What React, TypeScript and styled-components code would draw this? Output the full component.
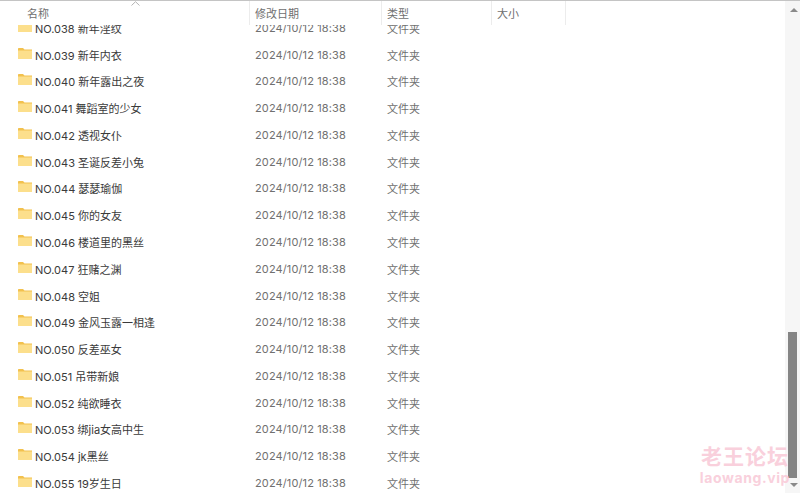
import { createGlobalStyle } from 'styled-components';
import styled from 'styled-components';

const folders = [
  'NO.038 新年淫纹',
  'NO.039 新年内衣',
  'NO.040 新年露出之夜',
  'NO.041 舞蹈室的少女',
  'NO.042 透视女仆',
  'NO.043 圣诞反差小兔',
  'NO.044 瑟瑟瑜伽',
  'NO.045 你的女友',
  'NO.046 楼道里的黑丝',
  'NO.047 狂赌之渊',
  'NO.048 空姐',
  'NO.049 金风玉露一相逢',
  'NO.050 反差巫女',
  'NO.051 吊带新娘',
  'NO.052 纯欲睡衣',
  'NO.053 绑jia女高中生',
  'NO.054 jk黑丝',
  'NO.055 19岁生日',
];

const FolderIcon = () => (
  <svg width="14" height="11" viewBox="0 0 14 11">
    <path d="M0 1C0 .4.4 0 1 0h4l1.5 1.5H14V11H0z" fill="#f2c14e" />
    <rect x="0" y="2.5" width="14" height="8.5" fill="#fcdf8c" />
  </svg>
);

const App = () => {
  return (
    <Page>
      <GlobalStyle />
      <Main>
        <Header>
          <NameHead>
            名称
            <SortArrow width="9" height="5" viewBox="0 0 9 5">
              <path d="M.5 4.5L4.5.7l4 3.8" fill="none" stroke="#b4b4b4" />
            </SortArrow>
          </NameHead>
          <DateHead>修改日期</DateHead>
          <TypeHead>类型</TypeHead>
          <SizeHead>大小</SizeHead>
        </Header>
        <List>
          <Rows>
            {folders.map((name) => (
              <Row key={name}>
                <NameCell>
                  <FolderIcon />
                  <span>{name}</span>
                </NameCell>
                <DateCell>2024/10/12 18:38</DateCell>
                <TypeCell>文件夹</TypeCell>
              </Row>
            ))}
          </Rows>
        </List>
      </Main>
      <Scrollbar>
        <UpArrow />
        <Thumb />
        <DownArrow />
      </Scrollbar>
      <Watermark>
        <WatermarkTitle>老王论坛</WatermarkTitle>
        <WatermarkUrl>laowang.vip</WatermarkUrl>
      </Watermark>
    </Page>
  );
};

export default App;

const GlobalStyle = createGlobalStyle`
  html, body {
    margin: 0;
    padding: 0;
    background: #fff;
  }
`;

const Page = styled.div`
  position: relative;
  display: flex;
  width: 800px;
  height: 493px;
  overflow: hidden;
  background: #fff;
  font-family: 'Inter', 'Noto Sans CJK SC', sans-serif;
`;

const Main = styled.div`
  flex: 1;
  display: flex;
  flex-direction: column;
  min-width: 0;
`;

const Header = styled.div`
  display: flex;
  height: 24px;
  flex: none;
  border-top: 1px solid #c4c4c4;
  color: #6f6f6f;
  font-size: 11px;
  background: #fff;
`;

const HeadCell = styled.div`
  position: relative;
  display: flex;
  align-items: center;
  height: 100%;
  border-right: 1px solid #ececec;
  box-sizing: border-box;
`;

const NameHead = styled(HeadCell)`
  width: 250px;
  padding-left: 27px;
`;

const SortArrow = styled.svg`
  position: absolute;
  left: 131px;
  top: 0;
`;

const DateHead = styled(HeadCell)`
  width: 132px;
  padding-left: 5px;
`;

const TypeHead = styled(HeadCell)`
  width: 110px;
  padding-left: 5px;
`;

const SizeHead = styled(HeadCell)`
  width: 74px;
  padding-left: 5px;
`;

const List = styled.div`
  flex: 1;
  overflow: hidden;
  min-height: 0;
`;

const Rows = styled.div`
  display: grid;
  grid-auto-rows: 26.77px;
  margin-top: -11.5px;
  padding-top: 1px;
`;

const Row = styled.div`
  display: flex;
  align-items: center;
  font-size: 11px;
`;

const NameCell = styled.div`
  display: flex;
  align-items: center;
  gap: 3px;
  width: 250px;
  padding-left: 18px;
  box-sizing: border-box;
  color: #3a3a3a;
  white-space: nowrap;

  svg {
    flex: none;
    margin-top: -3px;
  }
`;

const DateCell = styled.div`
  width: 132px;
  padding-left: 5px;
  box-sizing: border-box;
  color: #707070;
  letter-spacing: 0.12px;
`;

const TypeCell = styled.div`
  padding-left: 5px;
  color: #707070;
`;

const Scrollbar = styled.div`
  position: relative;
  flex: none;
  width: 15px;
  height: 100%;
  box-sizing: border-box;
  padding: 331px 3px 15px 3px;
  background: #f6f6f6;
  border-top: 1px solid #c4c4c4;
`;

const Thumb = styled.div`
  height: 100%;
  background: #858585;
`;

const UpArrow = styled.div`
  position: absolute;
  left: 5px;
  top: 7px;
  width: 0;
  height: 0;
  border-left: 4px solid transparent;
  border-right: 4px solid transparent;
  border-bottom: 4px solid #8a8a8a;
`;

const DownArrow = styled.div`
  position: absolute;
  left: 5px;
  bottom: 6px;
  width: 0;
  height: 0;
  border-left: 4px solid transparent;
  border-right: 4px solid transparent;
  border-top: 4px solid #8a8a8a;
`;

const Watermark = styled.div`
  position: absolute;
  right: 10px;
  bottom: 6px;
  display: flex;
  flex-direction: column;
  align-items: center;
  color: #f9d0dc;
  font-weight: 700;
  pointer-events: none;
`;

const WatermarkTitle = styled.div`
  font-size: 21px;
  line-height: 24px;
  letter-spacing: 1px;
`;

const WatermarkUrl = styled.div`
  font-size: 14px;
  line-height: 18px;
  letter-spacing: 0.6px;
`;
